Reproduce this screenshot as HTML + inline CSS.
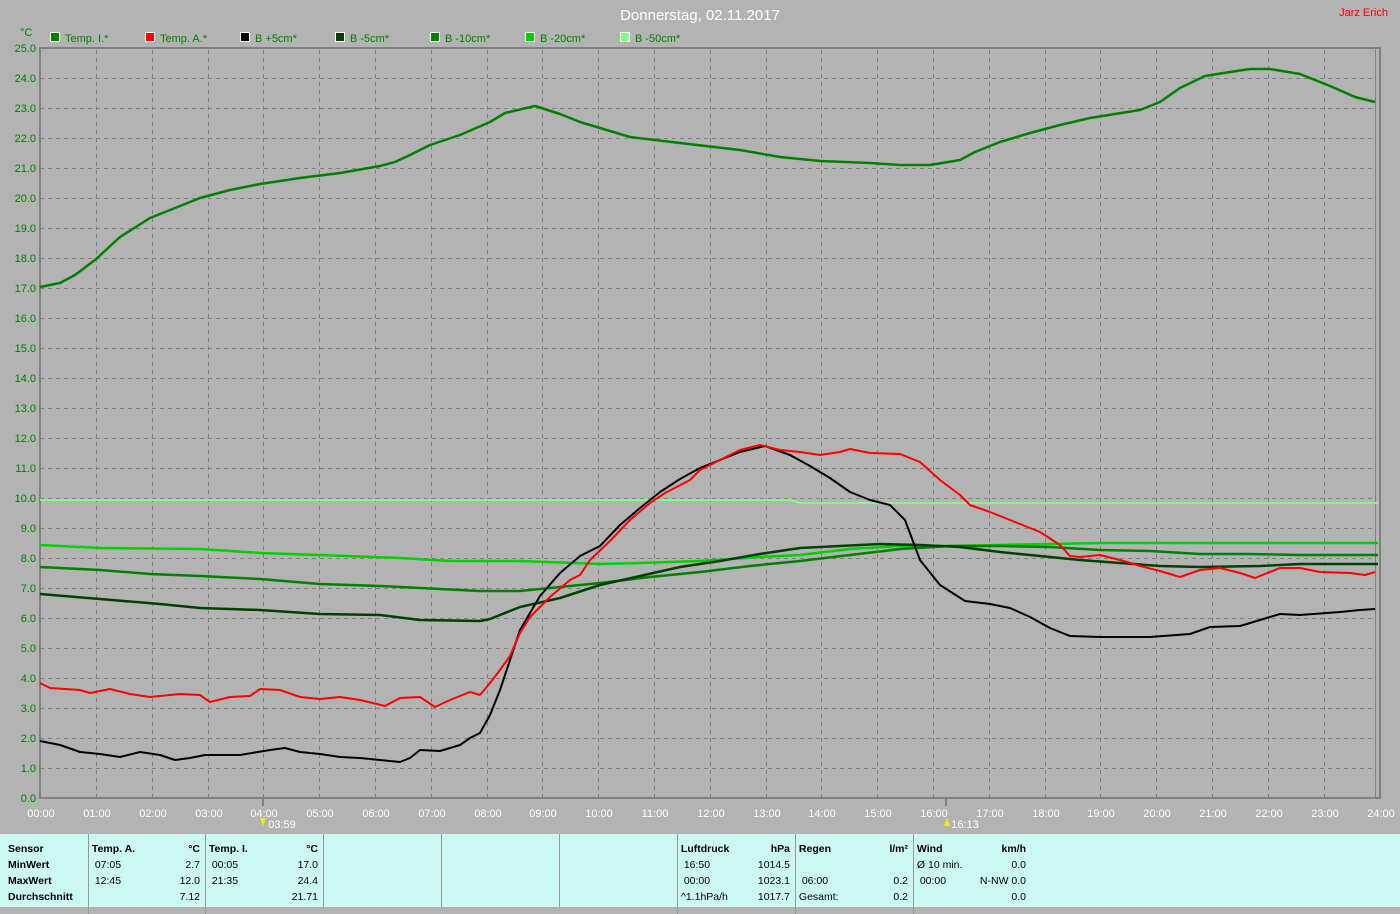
<!DOCTYPE html>
<html><head><meta charset="utf-8"><style>
body{margin:0;width:1400px;height:907px;background:#b3b3b3;overflow:hidden;font-family:"Liberation Sans",sans-serif;position:relative}
svg{position:absolute;left:0;top:0}
.panel{position:absolute;left:0;top:834px;width:1400px;height:73px;background:#ccf8f4}
.col{position:absolute;top:0;height:73px;border-left:1px solid #999;font-size:10.5px;line-height:16px;color:#000}
.col div{position:relative;height:16px;white-space:nowrap}
.b{font-weight:bold}
.r{position:absolute;right:6px;top:0}
</style></head><body>
<svg width="1400" height="834" viewBox="0 0 1400 834">
<g font-family="Liberation Sans" font-size="11">
<text x="700" y="20" fill="#fff" font-size="15" text-anchor="middle">Donnerstag, 02.11.2017</text>
<text x="1388" y="16" fill="#f00" text-anchor="end">Jarz Erich</text>
<text x="20" y="36" fill="#008000">°C</text>
<g stroke="#fff" stroke-width="1">
<rect x="50.5" y="32.5" width="9" height="9" fill="#008000"/>
<rect x="145.5" y="32.5" width="9" height="9" fill="#f00"/>
<rect x="240.5" y="32.5" width="9" height="9" fill="#000"/>
<rect x="335.5" y="32.5" width="9" height="9" fill="#004000"/>
<rect x="430.5" y="32.5" width="9" height="9" fill="#008000"/>
<rect x="525.5" y="32.5" width="9" height="9" fill="#00d000"/>
<rect x="620.5" y="32.5" width="9" height="9" fill="#80ff80"/>
</g>
<g fill="#008000">
<text x="65" y="42">Temp. I.*</text><text x="160" y="42">Temp. A.*</text><text x="255" y="42">B +5cm*</text><text x="350" y="42">B -5cm*</text><text x="445" y="42">B -10cm*</text><text x="540" y="42">B -20cm*</text><text x="635" y="42">B -50cm*</text>
</g>
<g stroke="#808080" stroke-dasharray="4,4" stroke-width="1">
<path d="M40 78.5H1376M40 108.5H1376M40 138.5H1376M40 168.5H1376M40 198.5H1376M40 228.5H1376M40 258.5H1376M40 288.5H1376M40 318.5H1376M40 348.5H1376M40 378.5H1376M40 408.5H1376M40 438.5H1376M40 468.5H1376M40 498.5H1376M40 528.5H1376M40 558.5H1376M40 588.5H1376M40 618.5H1376M40 648.5H1376M40 678.5H1376M40 708.5H1376M40 738.5H1376M40 768.5H1376"/>
<path d="M96.5 50V798M152.5 50V798M208.5 50V798M263.5 50V798M319.5 50V798M375.5 50V798M431.5 50V798M487.5 50V798M542.5 50V798M598.5 50V798M654.5 50V798M710.5 50V798M766.5 50V798M821.5 50V798M877.5 50V798M933.5 50V798M989.5 50V798M1045.5 50V798M1100.5 50V798M1156.5 50V798M1212.5 50V798M1268.5 50V798M1324.5 50V798"/>
</g>
<g stroke="#808080" fill="none">
<path d="M40 48H1380V798H40Z" stroke-width="2"/>
<path d="M1375.5 49V797" stroke-width="1"/>
<path d="M263 798V806M946 798V806" stroke-width="2"/>
</g>
<g fill="#008000" text-anchor="end">
<text x="36" y="52">25.0</text><text x="36" y="82">24.0</text><text x="36" y="112">23.0</text><text x="36" y="142">22.0</text><text x="36" y="172">21.0</text><text x="36" y="202">20.0</text><text x="36" y="232">19.0</text><text x="36" y="262">18.0</text><text x="36" y="292">17.0</text><text x="36" y="322">16.0</text><text x="36" y="352">15.0</text><text x="36" y="382">14.0</text><text x="36" y="412">13.0</text><text x="36" y="442">12.0</text><text x="36" y="472">11.0</text><text x="36" y="502">10.0</text><text x="36" y="532">9.0</text><text x="36" y="562">8.0</text><text x="36" y="592">7.0</text><text x="36" y="622">6.0</text><text x="36" y="652">5.0</text><text x="36" y="682">4.0</text><text x="36" y="712">3.0</text><text x="36" y="742">2.0</text><text x="36" y="772">1.0</text><text x="36" y="802">0.0</text>
</g>
<g fill="#fff" text-anchor="middle">
<text x="41" y="817">00:00</text><text x="97" y="817">01:00</text><text x="153" y="817">02:00</text><text x="209" y="817">03:00</text><text x="264" y="817">04:00</text><text x="320" y="817">05:00</text><text x="376" y="817">06:00</text><text x="432" y="817">07:00</text><text x="488" y="817">08:00</text><text x="543" y="817">09:00</text><text x="599" y="817">10:00</text><text x="655" y="817">11:00</text><text x="711" y="817">12:00</text><text x="767" y="817">13:00</text><text x="822" y="817">14:00</text><text x="878" y="817">15:00</text><text x="934" y="817">16:00</text><text x="990" y="817">17:00</text><text x="1046" y="817">18:00</text><text x="1101" y="817">19:00</text><text x="1157" y="817">20:00</text><text x="1213" y="817">21:00</text><text x="1269" y="817">22:00</text><text x="1325" y="817">23:00</text><text x="1381" y="817">24:00</text>
<text x="282" y="828">03:59</text><text x="965" y="828">16:13</text>
</g>
<path d="M260 818l3 8 3-8z" fill="#ee0"/><path d="M944 826l3-8 3 8z" fill="#ee0"/>
</g>
<g fill="none" stroke-width="2" stroke-linejoin="round">
<polyline stroke="#80ff80" points="40,500 790,500 800,503 1378,503"/>
<polyline stroke="#00d000" stroke-width="2.5" points="40,545 100,548 200,549 260,553 320,555 400,558 450,561 520,561 600,564 640,563 700,561 760,557 800,555 850,549 900,546 950,546 1000,545 1050,544 1100,543 1378,543"/>
<polyline stroke="#008000" stroke-width="2.5" points="40,567 100,570 150,574 200,576 260,579 320,584 380,586 440,589 480,591 520,591 560,587 600,583 650,577 700,572 750,566 800,561 850,555 900,549 950,546 1000,546 1050,547 1100,550 1150,551 1200,554 1250,554 1300,555 1378,555"/>
<polyline stroke="#004000" stroke-width="2.5" points="40,594 100,599 160,604 200,608 260,610 320,614 380,615 420,620 480,621 490,619 520,607 560,598 600,585 640,576 680,567 720,561 760,554 800,548 840,546 880,544 920,545 960,547 1000,552 1040,556 1080,560 1120,563 1160,566 1200,567 1260,566 1300,564 1378,564"/>
<polyline stroke="#000" points="40,741 60,745 80,752 100,754 120,757 140,752 160,755 175,760 190,758 205,755 240,755 270,750 285,748 300,752 320,754 340,757 360,758 380,760 400,762 410,758 420,750 440,751 460,745 470,738 480,733 490,715 500,690 510,660 520,630 540,596 560,573 580,556 600,546 620,525 640,508 660,492 680,479 700,468 720,460 740,452 765,446 790,455 810,466 830,478 850,492 870,500 890,505 905,520 920,560 940,585 965,601 990,604 1010,608 1030,617 1050,628 1070,636 1100,637 1150,637 1190,634 1210,627 1240,626 1260,620 1280,614 1300,615 1340,612 1360,610 1375,609"/>
<polyline stroke="#f00" points="40,683 50,688 80,690 90,693 110,689 130,694 150,697 180,694 200,695 210,702 230,697 250,696 260,689 280,690 300,697 320,699 340,697 360,700 385,706 400,698 420,697 435,707 450,700 470,692 480,695 490,683 500,670 510,656 520,633 530,617 550,597 570,580 580,575 590,560 610,541 630,520 650,503 665,493 690,480 700,470 720,460 740,450 760,445 780,450 800,452 820,455 840,452 850,449 870,453 900,454 920,462 940,480 960,495 970,505 990,512 1010,520 1040,532 1060,545 1070,556 1080,557 1100,555 1120,560 1140,566 1160,571 1180,577 1200,570 1220,568 1240,573 1255,578 1280,568 1300,568 1320,572 1350,573 1365,575 1375,572"/>
<polyline stroke="#008000" stroke-width="2.5" points="40,287 60,283 75,275 95,260 120,237 150,218 175,208 200,198 230,190 260,184 300,178 340,173 380,166 395,162 410,155 430,145 460,135 490,122 505,113 535,106 560,114 580,122 600,128 630,137 680,143 740,150 780,157 820,161 870,163 900,165 930,165 960,160 975,152 1000,142 1030,133 1060,125 1090,118 1140,110 1160,102 1180,88 1205,76 1230,72 1250,69 1270,69 1300,74 1330,86 1355,97 1375,102"/>
</g>
</svg>
<div class="panel">
<div class="col b" style="left:0;width:88px;border-left:none;padding-left:8px;top:7px"><div>Sensor</div><div>MinWert</div><div>MaxWert</div><div>Durchschnitt</div></div>
<div class="col" style="left:88px;width:117px;padding-top:7px"><div class="b">&nbsp;Temp. A.<span class="r">°C</span></div><div>&nbsp;&nbsp;07:05<span class="r">2.7</span></div><div>&nbsp;&nbsp;12:45<span class="r">12.0</span></div><div><span class="r">7.12</span></div></div>
<div class="col" style="left:205px;width:118px;padding-top:7px"><div class="b">&nbsp;Temp. I.<span class="r">°C</span></div><div>&nbsp;&nbsp;00:05<span class="r">17.0</span></div><div>&nbsp;&nbsp;21:35<span class="r">24.4</span></div><div><span class="r">21.71</span></div></div>
<div class="col" style="left:323px;width:118px"></div>
<div class="col" style="left:441px;width:118px"></div>
<div class="col" style="left:559px;width:118px"></div>
<div class="col" style="left:677px;width:118px;padding-top:7px"><div class="b">&nbsp;Luftdruck<span class="r">hPa</span></div><div>&nbsp;&nbsp;16:50<span class="r">1014.5</span></div><div>&nbsp;&nbsp;00:00<span class="r">1023.1</span></div><div>&nbsp;^1.1hPa/h<span class="r">1017.7</span></div></div>
<div class="col" style="left:795px;width:118px;padding-top:7px"><div class="b">&nbsp;Regen<span class="r">l/m²</span></div><div></div><div>&nbsp;&nbsp;06:00<span class="r">0.2</span></div><div>&nbsp;Gesamt:<span class="r">0.2</span></div></div>
<div class="col" style="left:913px;width:118px;padding-top:7px"><div class="b">&nbsp;Wind<span class="r">km/h</span></div><div>&nbsp;Ø 10 min.<span class="r">0.0</span></div><div>&nbsp;&nbsp;00:00<span class="r">N-NW 0.0</span></div><div><span class="r">0.0</span></div></div>
</div>
</body></html>
